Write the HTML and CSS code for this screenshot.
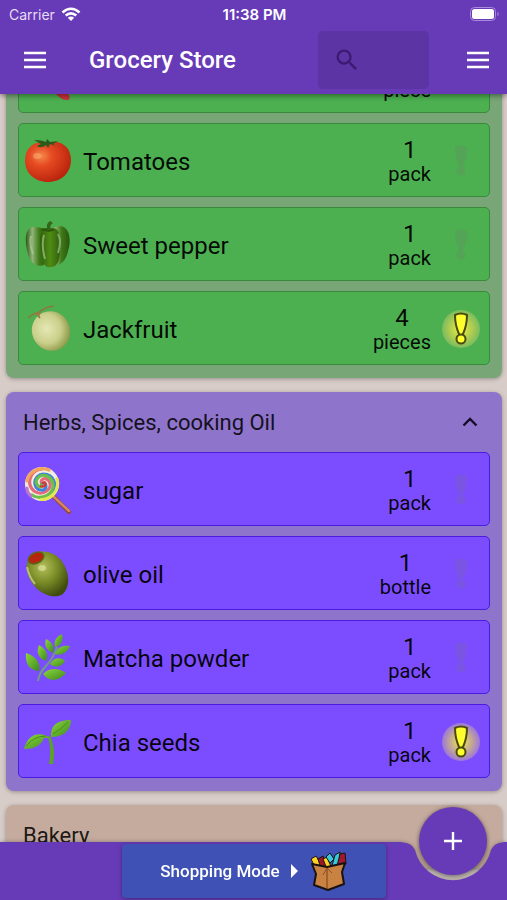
FILE: index.html
```html
<!DOCTYPE html>
<html lang="en">
<head>
  <meta charset="UTF-8" />
  <meta name="viewport" content="width=device-width, initial-scale=1.0"/>
  <title>Grocery Store</title>
  <link rel="stylesheet" href="styles.css">
</head>
<body>

  <!-- Shared shapes and gradients -->
  <svg class="defs" aria-hidden="true">
    <defs>
      <radialGradient id="g-tomato" cx="35%" cy="35%" r="70%">
        <stop offset="0" stop-color="#f58a4a"/><stop offset="0.35" stop-color="#e64a22"/><stop offset="1" stop-color="#b8230c"/>
      </radialGradient>
      <linearGradient id="g-pepper" x1="0" x2="1">
        <stop offset="0" stop-color="#2c5a12"/><stop offset="0.3" stop-color="#8fb479"/><stop offset="0.6" stop-color="#3f7a17"/><stop offset="1" stop-color="#28540f"/>
      </linearGradient>
      <linearGradient id="g-pepper-mid" x1="0" x2="1">
        <stop offset="0" stop-color="#2f620c"/><stop offset="0.5" stop-color="#4f8c14"/><stop offset="1" stop-color="#2f5f0e"/>
      </linearGradient>
      <radialGradient id="g-melon" cx="42%" cy="40%" r="62%">
        <stop offset="0" stop-color="#e6e8b4"/><stop offset="0.6" stop-color="#c9cf8a"/><stop offset="1" stop-color="#8d9a4a"/>
      </radialGradient>
      <radialGradient id="g-olive" cx="40%" cy="35%" r="68%">
        <stop offset="0" stop-color="#b4bf5c"/><stop offset="0.5" stop-color="#7a8c26"/><stop offset="1" stop-color="#3f4c0e"/>
      </radialGradient>
      <linearGradient id="g-leaf" x1="0" y1="0" x2="1" y2="1">
        <stop offset="0" stop-color="#8ed63c"/><stop offset="1" stop-color="#3c8a1c"/>
      </linearGradient>
      <radialGradient id="g-glow">
        <stop offset="0" stop-color="#ffff3b" stop-opacity="0.9"/><stop offset="0.6" stop-color="#f0e050" stop-opacity="0.6"/><stop offset="1" stop-color="#e6dc78" stop-opacity="0.3"/>
      </radialGradient>
      <symbol id="mark" viewBox="0 0 40 40">
        <path d="M14 6Q20 3 26 6Q26 16 22 25Q20 27 18 25Q14 16 14 6Z"/>
        <circle cx="20" cy="30" r="4.500"/>
      </symbol>
      <symbol id="menu" viewBox="0 0 24 24">
        <path d="M1 5h22M1 12h22M1 19h22" stroke="#fff" stroke-width="2.6"/>
      </symbol>
    </defs>
  </svg>

  <header class="app-bar">
    <div class="status-bar">
      <span class="carrier">Carrier
        <svg width="20" height="15" viewBox="0 0 20 15" fill="none" stroke="#fff" stroke-width="2.6">
          <path d="M1.5 5.5Q10-2 18.500 5.500M4.700 8.600Q10 4 15.300 8.600"/>
          <path d="M10 14L6.800 10.800Q10 8.300 13.200 10.800Z" fill="#fff" stroke="none"/>
        </svg>
      </span>
      <span class="clock">11:38 PM</span>
      <svg class="battery" width="30" height="14" viewBox="0 0 30 14">
        <rect x="0.500" y="0.500" width="25" height="13" rx="4" fill="none" stroke="#a98bdc"/>
        <rect x="2" y="2" width="22" height="10" rx="2.500" fill="#fff"/>
        <path d="M27.500 4.500Q30 7 27.500 9.500Z" fill="#a98bdc"/>
      </svg>
    </div>
    <div class="toolbar">
      <button class="icon-btn" aria-label="Open menu"><svg width="24" height="24"><use href="#menu"/></svg></button>
      <h1>Grocery Store</h1>
      <label class="search">
        <svg width="28" height="28" viewBox="0 0 24 24" fill="#3b1a72"><path d="M15.500 14h-.79l-.28-.27A6.470 6.470 0 0 0 16 9.500 6.500 6.500 0 1 0 9.500 16c1.610 0 3.090-.59 4.230-1.570l.27.28v.79l5 4.990L20.490 19l-4.990-5zm-6 0C7.010 14 5 11.990 5 9.500S7.010 5 9.500 5 14 7.010 14 9.500 11.990 14 9.500 14z"/></svg>
        <input type="text" aria-label="Search">
      </label>
      <button class="icon-btn" aria-label="Open list menu"><svg width="24" height="24"><use href="#menu"/></svg></button>
    </div>
  </header>

  <main id="list">
    <section class="group green">
      <div class="item">
        <svg class="pic" viewBox="0 0 48 48"><path d="M14 6Q16 30 38 46Q48 49 45 42Q28 32 24 6Z" fill="#c8323a"/></svg>
        <span class="name"></span>
        <span class="qty"><b>1</b>piece</span>
        <button class="flag" aria-label="Mark important"><svg viewBox="0 0 40 40"><use href="#mark"/></svg></button>
      </div>
      <div class="item">
        <svg class="pic" viewBox="0 0 48 48">
          <path d="M24 6C37 2 47 10 47 23C47 36 37 45 24 45S1 36 1 24C1 10 11 3 24 6Z" fill="url(#g-tomato)"/>
          <path d="M22 8Q17 12 13 9L17 7L10 3Q18 3 22 5L23 2L26 5L34 4L29 7L32 9L26 7L24 11Z" fill="#2d5a1b"/>
          <ellipse cx="13" cy="19" rx="4" ry="3" fill="#ffc08a" opacity=".4"/>
        </svg>
        <span class="name">Tomatoes</span>
        <span class="qty"><b>1</b>pack</span>
        <button class="flag" aria-label="Mark important"><svg viewBox="0 0 40 40"><use href="#mark"/></svg></button>
      </div>
      <div class="item">
        <svg class="pic" viewBox="0 0 48 48">
          <path d="M12 6C2 4 0 17 3 29C5 41 12 47 20 44L24 8Z" fill="url(#g-pepper)"/>
          <path d="M34 5C45 4 48 17 44 30C42 40 36 46 28 44L25 8Z" fill="url(#g-pepper)"/>
          <path d="M24 8C14 6 15 22 18 36Q20 48 27 46Q36 46 36 28C37 12 34 4 24 8Z" fill="url(#g-pepper-mid)"/>
          <path d="M20 14Q17 24 21 38M34 13Q38 20 34 32M7 15Q5 23 9 33" fill="none" stroke="#b6cfa2" stroke-width="2" opacity=".6"/>
          <path d="M16 9Q24 5 32 9L25 11Z" fill="#2d5b0d"/>
          <path d="M24 9Q21 3 26 0L29 2Q25 4 27 9Z" fill="#356615"/>
        </svg>
        <span class="name">Sweet pepper</span>
        <span class="qty"><b>1</b>pack</span>
        <button class="flag" aria-label="Mark important"><svg viewBox="0 0 40 40"><use href="#mark"/></svg></button>
      </div>
      <div class="item">
        <svg class="pic" viewBox="0 0 48 48">
          <ellipse cx="27" cy="26" rx="19" ry="20" transform="rotate(-25 27 26)" fill="url(#g-melon)"/>
          <path d="M4 13Q9 8 14 8Q21 2 30 1M12 8L16 13" fill="none" stroke="#8b7a3d" stroke-width="1.500"/>
          <path d="M11 8L17 7L15 12Z" fill="#9a7c45"/>
        </svg>
        <span class="name">Jackfruit</span>
        <span class="qty"><b>4</b>pieces</span>
        <button class="flag on" aria-label="Important"><svg viewBox="0 0 40 40"><circle cx="20" cy="20" r="19" fill="url(#g-glow)"/><use href="#mark"/></svg></button>
      </div>
    </section>

    <section class="group purple">
      <button class="group-head">
        <span>Herbs, Spices, cooking Oil</span>
        <svg width="16" height="10" viewBox="0 0 16 10" fill="none" stroke="#150c28" stroke-width="2.400"><path d="M1.500 8.500L8 2L14.500 8.500"/></svg>
      </button>
      <div class="item">
        <svg class="pic" viewBox="0 0 48 48">
          <path d="M30 31L45 46" stroke="#8e4a3a" stroke-width="4" stroke-linecap="round"/>
          <path d="M30 31L45 45" stroke="#d8865f" stroke-width="2.400" stroke-linecap="round"/>
          <circle cx="18" cy="18" r="17" fill="#f3efdc"/>
          <g fill="none" stroke-width="3.200" stroke-linecap="round">
            <path d="M18 18C15 14 21 10 25 15C30 23 18 31 10 25C1 17 7 4 18 3" stroke="#e56a80"/>
            <path d="M18 18C24 16 23 25 17 24C8 23 9 9 19 8C31 8 34 21 27 29" stroke="#3f83dc"/>
            <path d="M18 18C18 24 10 19 13 13C18 5 30 11 29 21C27 31 15 34 8 29" stroke="#6ac04a"/>
            <path d="M3 15C5 5 16 0 25 4" stroke="#f0a45c"/>
            <path d="M33 13C36 24 27 34 17 33.500" stroke="#e5e84c"/>
            <path d="M3 22Q3 27 7 30" stroke="#b778cc"/>
          </g>
          <path d="M18 18Q21 14 22 18Q20 22 16 20" fill="none" stroke="#d8382f" stroke-width="2"/>
        </svg>
        <span class="name">sugar</span>
        <span class="qty"><b>1</b>pack</span>
        <button class="flag" aria-label="Mark important"><svg viewBox="0 0 40 40"><use href="#mark"/></svg></button>
      </div>
      <div class="item">
        <svg class="pic" viewBox="0 0 48 48">
          <path d="M7 6C16-2 32 1 39 13C46 24 46 37 39 44C31 50 15 44 8 33C2 24 0 13 7 6Z" fill="url(#g-olive)"/>
          <ellipse cx="12" cy="8" rx="9" ry="6" transform="rotate(-25 12 8)" fill="#5c6720"/>
          <ellipse cx="12" cy="8" rx="7.500" ry="4.500" transform="rotate(-25 12 8)" fill="#b5260d"/>
          <path d="M3 17Q5 27 11 34" fill="none" stroke="#d4d89c" stroke-width="2" opacity=".7"/>
          <ellipse cx="18" cy="18" rx="4" ry="3" fill="#edf1bd" opacity=".5"/>
        </svg>
        <span class="name">olive oil</span>
        <span class="qty"><b>1</b>bottle</span>
        <button class="flag" aria-label="Mark important"><svg viewBox="0 0 40 40"><use href="#mark"/></svg></button>
      </div>
      <div class="item">
        <svg class="pic" viewBox="0 0 48 48">
          <path d="M14 47Q15 39 22 32T33 13" fill="none" stroke="#6f9a86" stroke-width="2"/>
          <g fill="url(#g-leaf)">
            <path d="M15 37C5 36 1 30 2 19C11 22 17 28 15 37Z"/>
            <path d="M22 27C14 24 12 18 15 11C22 15 25 20 22 27Z"/>
            <path d="M29 19C22 16 20 11 22 5C28 8 31 13 29 19Z"/>
            <path d="M31 13C29 7 33 2 38 0C40 6 37 12 31 13Z"/>
            <path d="M31 20C34 12 40 11 46 12C43 19 37 22 31 20Z"/>
            <path d="M26 30C30 23 37 23 41 27C37 34 31 34 26 30Z"/>
            <path d="M19 40C25 33 35 34 42 39C34 48 25 48 19 40Z"/>
          </g>
        </svg>
        <span class="name">Matcha powder</span>
        <span class="qty"><b>1</b>pack</span>
        <button class="flag" aria-label="Mark important"><svg viewBox="0 0 40 40"><use href="#mark"/></svg></button>
      </div>
      <div class="item">
        <svg class="pic" viewBox="0 0 48 48">
          <path d="M26 18Q32 30 29 46H25Q28 31 24 19Z" fill="#5aa51d"/>
          <path d="M27 20C16 13 4 15 0 31C10 31 17 28 20 20Z" fill="url(#g-leaf)"/>
          <path d="M27 19C26 7 34 2 47 2C47 13 39 19 27 19Z" fill="url(#g-leaf)"/>
          <path d="M2 28Q10 18 22 18M29 16Q37 11 44 4" fill="none" stroke="#2f7413" opacity=".6"/>
        </svg>
        <span class="name">Chia seeds</span>
        <span class="qty"><b>1</b>pack</span>
        <button class="flag on" aria-label="Important"><svg viewBox="0 0 40 40"><circle cx="20" cy="20" r="19" fill="url(#g-glow)"/><use href="#mark"/></svg></button>
      </div>
    </section>

    <section class="group brown">
      <button class="group-head"><span>Bakery</span></button>
    </section>
  </main>

  <nav class="bottom-bar">
    <svg class="notch" width="114" height="58" viewBox="0 0 114 58"><path d="M0 0H4C14 0 19 2 22 8A39 39 0 0 0 98 8C101 2 106 0 114 0V58H0Z" fill="#673ab7"/></svg>
    <button class="mode-btn">
      Shopping Mode
      <svg width="7" height="14" viewBox="0 0 7 14"><path d="M0 0L7 7L0 14Z" fill="#fff"/></svg>
      <svg class="bag" width="38" height="40" viewBox="0 0 38 40" stroke="#1a1210" stroke-linejoin="round">
        <path d="M2 8L7 5L15 18H7Z" fill="#ffd21f"/>
        <path d="M9 8L14 5L18 18H12Z" fill="#9c1626"/>
        <path d="M18 18L14 8L18 6L23 18Z" fill="#ffd21f"/>
        <path d="M17 6L21 2L25 8L21 12Z" fill="#35c9dd"/>
        <path d="M22 18L26 4L31 1L30 14Z" fill="#35c9dd"/>
        <path d="M28 15L31 3L36 2L37 13Z" fill="#a3182b"/>
        <path d="M3 13L18 16L36 12L33 21L35 33L19 39L5 34L7 23Z" fill="#c98242" stroke-width="2"/>
        <path d="M18 17V38" fill="none" stroke="#75401c"/>
        <path d="M18 17L14 24M18 17L23 22" fill="none" stroke="#8f5426"/>
      </svg>
    </button>
    <button class="fab" aria-label="Add item">
      <svg width="18" height="18" viewBox="0 0 18 18"><path d="M9 0V18M0 9H18" stroke="#fff" stroke-width="2.400"/></svg>
    </button>
  </nav>

  <script>
    // keep the first row tucked under the app bar
    document.getElementById("list").scrollTop = 69;
  </script>
</body>
</html>
```
FILE: styles.css
```css
:root {
  --primary: #673ab7;
  --page: #d7ccc8;
}

* {
  box-sizing: border-box;
}

body {
  margin: 0;
  height: 100vh;
  display: flex;
  flex-direction: column;
  overflow: hidden;
  background: var(--page);
  color: rgba(0, 0, 0, 0.87);
  font-family: Roboto, "Liberation Sans", sans-serif;
}

button {
  border: none;
  padding: 0;
  background: none;
  color: inherit;
  font-family: inherit;
  cursor: pointer;
}

svg {
  display: block;
  flex: none;
}

.defs {
  position: absolute;
  width: 0;
  height: 0;
}

/* App bar */
.app-bar {
  position: relative;
  z-index: 2;
  background: var(--primary);
  color: #fff;
  box-shadow: 0 2px 5px rgba(0, 0, 0, 0.4);
}

.status-bar {
  display: grid;
  grid-template-columns: 1fr auto 1fr;
  align-items: center;
  height: 28px;
  padding: 0 7px 0 9px;
  font-family: Inter, sans-serif;
  font-size: 14px;
}

.carrier {
  display: flex;
  align-items: center;
  gap: 6px;
  color: #e6dcf6;
}

.clock {
  font-size: 15px;
  font-weight: 600;
}

.battery {
  justify-self: end;
}

.toolbar {
  display: flex;
  align-items: center;
  height: 66px;
  padding: 0 17px 2px 23px;
}

.toolbar h1 {
  flex: 1;
  margin: 0 0 0 42px;
  font-size: 24px;
  font-weight: 500;
}

.search {
  display: flex;
  align-items: center;
  width: 111px;
  height: 58px;
  margin-right: 37px;
  padding: 0 15px;
  border-radius: 5px;
  background: #5c34a4;
}

.search input {
  width: 100%;
  min-width: 0;
  border: none;
  outline: none;
  background: none;
  color: #fff;
  font-size: 16px;
}

/* Grocery list */
#list {
  flex: 1;
  min-height: 0;
  padding: 14px 5px 120px 6px;
  display: flex;
  flex-direction: column;
  gap: 14px;
  overflow-y: auto;
  scrollbar-width: none;
}

.group {
  flex: none;
  display: flex;
  flex-direction: column;
  gap: 10px;
  padding: 0 12px 13px;
  border-radius: 8px;
  box-shadow: 0 1px 4px rgba(0, 0, 0, 0.3);
}

.green {
  --row: #4caf50;
  --line: #3a8a3e;
  background: #78a676;
}

.purple {
  --row: #7c4dff;
  --line: #4a1be0;
  background: #8e74cb;
}

.brown {
  background: #c5ab9e;
}

.group-head {
  display: flex;
  align-items: center;
  justify-content: space-between;
  height: 60px;
  margin-bottom: -10px;
  padding: 0 12px 0 5px;
  font-size: 22px;
  text-align: left;
}

.item {
  display: flex;
  align-items: center;
  height: 74px;
  padding: 1px 8px 0 5px;
  border: 1px solid var(--line);
  border-radius: 5px;
  background: var(--row);
  color: rgba(0, 0, 0, 0.95);
}

.pic {
  width: 48px;
  height: 48px;
}

.name {
  flex: 1;
  margin-left: 11px;
  padding-top: 2px;
  font-size: 24px;
}

.qty {
  display: flex;
  flex-direction: column;
  align-items: center;
  margin-right: 10px;
  padding-top: 2px;
  font-size: 20px;
  line-height: 24px;
}

.qty b {
  font-size: 24px;
  font-weight: 400;
}

.flag svg {
  width: 40px;
  height: 40px;
  fill: #777;
  opacity: 0.2;
}

.flag.on svg {
  fill: #ffff2e;
  stroke: #4a4a10;
  stroke-width: 2;
  opacity: 1;
}

.flag circle {
  stroke: none;
}

.flag.on symbol circle {
  stroke: #4a4a10;
}

/* Bottom bar */
.bottom-bar {
  position: fixed;
  z-index: 3;
  left: 0;
  right: 0;
  bottom: 0;
  display: flex;
  justify-content: center;
  align-items: center;
  height: 58px;
  filter: drop-shadow(0 0 2px rgba(0, 0, 0, 0.3));
}

.bottom-bar::before {
  content: "";
  position: absolute;
  inset: 0 113px 0 0;
  background: var(--primary);
}

.notch {
  position: absolute;
  right: 0;
  top: 0;
}

.mode-btn {
  position: relative;
  display: flex;
  align-items: center;
  justify-content: center;
  gap: 11px;
  width: 264px;
  height: 54px;
  border-radius: 4px;
  background: #3f51b5;
  color: #fff;
  font-size: 17px;
  font-weight: 500;
  box-shadow: 0 1px 4px rgba(0, 0, 0, 0.35);
}

.fab {
  position: absolute;
  right: 20px;
  bottom: 25px;
  display: flex;
  align-items: center;
  justify-content: center;
  width: 68px;
  height: 68px;
  border-radius: 50%;
  background: var(--primary);
  box-shadow: 0 2px 4px rgba(0, 0, 0, 0.3);
}
```
